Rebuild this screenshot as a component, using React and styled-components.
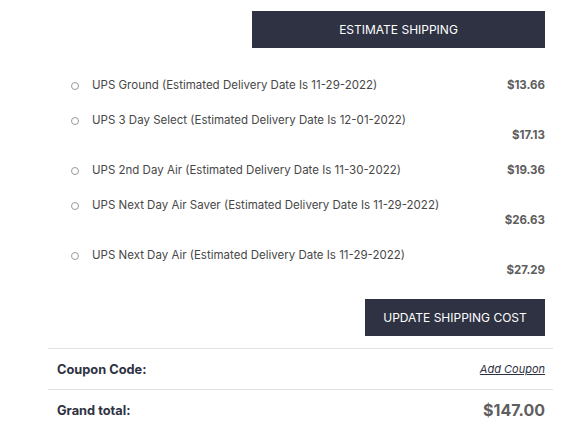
import React, { useState } from "react";
import styled, { createGlobalStyle } from "styled-components";

const GlobalStyle = createGlobalStyle`
  body {
    margin: 0;
    background: #ffffff;
    font-family: "Inter", "Liberation Sans", sans-serif;
  }
`;

const rates = [
  { id: "ground", name: "UPS Ground", date: "11-29-2022", price: "$13.66", wrap: false },
  { id: "3day", name: "UPS 3 Day Select", date: "12-01-2022", price: "$17.13", wrap: true },
  { id: "2day", name: "UPS 2nd Day Air", date: "11-30-2022", price: "$19.36", wrap: false },
  { id: "saver", name: "UPS Next Day Air Saver", date: "11-29-2022", price: "$26.63", wrap: true },
  { id: "nextday", name: "UPS Next Day Air", date: "11-29-2022", price: "$27.29", wrap: true },
];

const Panel = styled.div`
  width: 505px;
  margin-left: 48px;
  padding-top: 11px;
  color: #2e3243;
`;

const ButtonRow = styled.div`
  display: flex;
  justify-content: flex-end;
  padding-right: 8px;
`;

const DarkButton = styled.button`
  width: ${({ wide }) => (wide ? "293px" : "180px")};
  height: 37px;
  background: #2e3243;
  color: #ffffff;
  border: none;
  font-family: "Inter", "Liberation Sans", sans-serif;
  font-size: 12px;
  text-transform: uppercase;
  cursor: pointer;
`;

const RateList = styled.ul`
  list-style: none;
  margin: 30px 8px 0 23px;
  padding: 0;
  display: flex;
  flex-direction: column;
  gap: 20px;
`;

const Rate = styled.li`
  display: flex;
  flex-wrap: wrap;
  align-items: center;
  justify-content: space-between;
  line-height: 15px;
`;

const RateLabel = styled.label`
  display: flex;
  align-items: center;
  gap: 13px;
  font-size: 11.5px;
  color: #474747;
  cursor: pointer;
`;

const Radio = styled.input.attrs({ type: "radio" })`
  appearance: none;
  width: 8px;
  height: 8px;
  margin: 0;
  border: 1px solid #9a9a9a;
  border-radius: 50%;
  background: #fff;
  &:checked {
    background: #2e3243;
    border-color: #2e3243;
  }
`;

const Price = styled.span`
  font-size: 11.5px;
  font-weight: 700;
  color: #5e5e5e;
  ${({ wrap }) => wrap && "flex-basis: 100%; text-align: right;"}
`;

const UpdateRow = styled(ButtonRow)`
  margin-top: 21px;
`;

const SummaryRow = styled.div`
  display: flex;
  align-items: center;
  justify-content: space-between;
  height: 40px;
  padding: 0 8px 0 9px;
  border-top: 1px solid #e2e2e2;
`;

const SummaryLabel = styled.span`
  font-size: 12.8px;
  font-weight: 700;
  color: #2e3243;
`;

const CouponLink = styled.a`
  font-size: 11px;
  font-style: italic;
  color: #2e3243;
  text-decoration: underline;
  cursor: pointer;
`;

const Total = styled.span`
  font-size: 16px;
  font-weight: 700;
  color: #5f5f5f;
`;

const Summary = styled.div`
  margin-top: 12px;
`;

export default function App() {
  const [selected, setSelected] = useState(null);

  return (
    <>
      <GlobalStyle />
      <Panel>
        <ButtonRow>
          <DarkButton wide>Estimate Shipping</DarkButton>
        </ButtonRow>
        <RateList>
          {rates.map((rate) => (
            <Rate key={rate.id}>
              <RateLabel>
                <Radio
                  name="rate"
                  checked={selected === rate.id}
                  onChange={() => setSelected(rate.id)}
                />
                {rate.name} (Estimated Delivery Date Is {rate.date})
              </RateLabel>
              <Price wrap={rate.wrap}>{rate.price}</Price>
            </Rate>
          ))}
        </RateList>
        <UpdateRow>
          <DarkButton>Update Shipping Cost</DarkButton>
        </UpdateRow>
        <Summary>
          <SummaryRow>
            <SummaryLabel>Coupon Code:</SummaryLabel>
            <CouponLink>Add Coupon</CouponLink>
          </SummaryRow>
          <SummaryRow>
            <SummaryLabel>Grand total:</SummaryLabel>
            <Total>$147.00</Total>
          </SummaryRow>
        </Summary>
      </Panel>
    </>
  );
}
